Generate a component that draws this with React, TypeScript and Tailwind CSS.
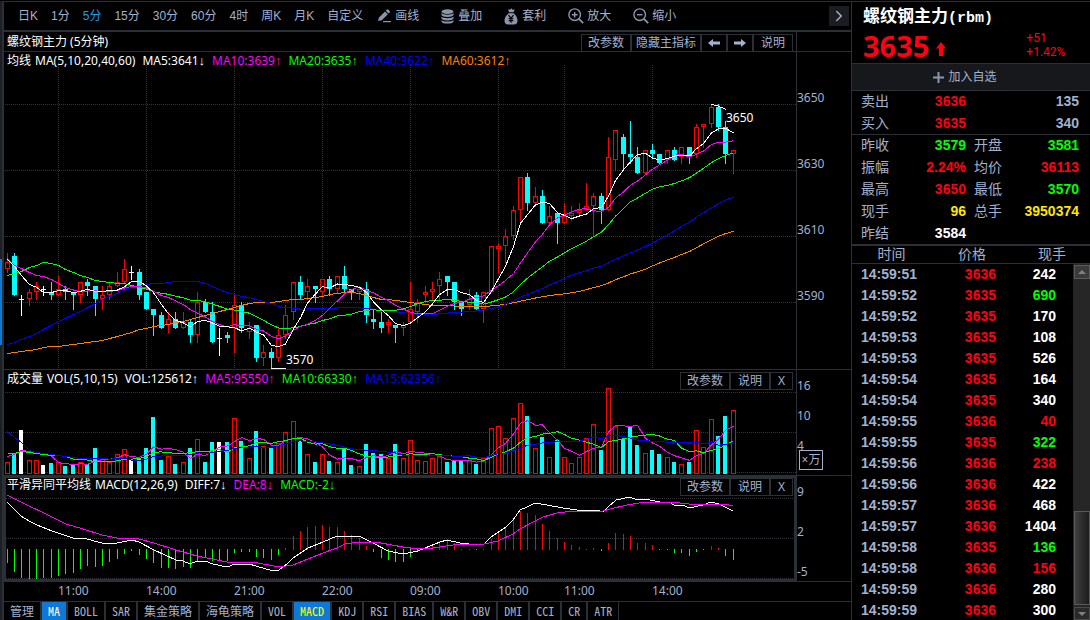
import React from "react";
import { ChevronRight } from "lucide-react";

const UI_FONT = "font-['Liberation_Sans','Noto_Sans_CJK_SC',sans-serif]";
const LABEL_FONT = "font-['Noto_Sans','Noto_Sans_CJK_SC',sans-serif]";

// [kind, high, body top, body bottom, low]; r = rising, c = falling, w = unchanged
type Candle = ["r" | "c" | "w", number, number, number, number];

const candles: Candle[] = [
  ["r", 3605, 3602, 3600, 3599], ["c", 3605, 3604, 3592, 3592], ["w", 3592, 3591, 3591, 3586], ["r", 3594, 3593, 3591, 3589],
  ["r", 3596, 3595, 3593, 3591], ["w", 3595, 3594, 3594, 3592], ["c", 3596, 3593, 3592, 3591], ["r", 3598, 3594, 3592, 3592],
  ["c", 3595, 3594, 3593, 3591], ["c", 3593, 3593, 3592, 3588], ["r", 3596, 3596, 3592, 3590], ["c", 3597, 3596, 3595, 3592],
  ["c", 3595, 3595, 3591, 3586], ["r", 3595, 3592, 3591, 3588], ["r", 3596, 3595, 3592, 3591], ["r", 3599, 3596, 3595, 3595],
  ["r", 3603, 3600, 3596, 3596], ["w", 3601, 3599, 3599, 3597], ["c", 3600, 3599, 3592, 3591], ["c", 3593, 3593, 3588, 3588],
  ["c", 3588, 3588, 3586, 3580], ["c", 3587, 3586, 3582, 3582], ["r", 3587, 3585, 3583, 3581], ["c", 3587, 3585, 3582, 3582],
  ["r", 3587, 3584, 3582, 3582], ["c", 3585, 3584, 3580, 3578], ["r", 3593, 3590, 3580, 3578], ["c", 3591, 3590, 3587, 3587],
  ["c", 3590, 3587, 3578, 3578], ["w", 3582, 3579, 3579, 3574], ["c", 3581, 3580, 3579, 3578], ["r", 3592, 3589, 3582, 3575],
  ["c", 3590, 3589, 3582, 3581], ["r", 3584, 3582, 3581, 3579], ["c", 3583, 3583, 3573, 3572], ["r", 3577, 3575, 3573, 3571],
  ["c", 3576, 3575, 3573, 3570], ["r", 3582, 3580, 3573, 3572], ["r", 3589, 3586, 3580, 3579], ["r", 3596, 3596, 3587, 3585],
  ["c", 3598, 3596, 3592, 3591], ["r", 3597, 3595, 3593, 3591], ["c", 3595, 3595, 3594, 3590], ["r", 3597, 3597, 3593, 3592],
  ["c", 3598, 3597, 3594, 3592], ["r", 3598, 3598, 3594, 3593], ["c", 3601, 3598, 3594, 3593], ["c", 3594, 3594, 3593, 3591],
  ["r", 3595, 3594, 3593, 3591], ["c", 3596, 3594, 3586, 3584], ["c", 3588, 3585, 3584, 3582], ["c", 3587, 3584, 3582, 3581],
  ["r", 3585, 3584, 3583, 3581], ["c", 3583, 3583, 3582, 3578], ["r", 3584, 3583, 3582, 3580], ["r", 3596, 3588, 3584, 3584],
  ["r", 3591, 3590, 3587, 3584], ["r", 3595, 3593, 3592, 3590], ["r", 3596, 3594, 3593, 3591], ["r", 3599, 3597, 3595, 3591],
  ["c", 3598, 3598, 3596, 3592], ["c", 3596, 3596, 3590, 3588], ["c", 3590, 3590, 3588, 3586], ["r", 3594, 3591, 3589, 3588],
  ["c", 3593, 3592, 3588, 3588], ["r", 3593, 3593, 3588, 3584], ["r", 3607, 3607, 3593, 3593], ["r", 3608, 3607, 3606, 3599],
  ["r", 3612, 3610, 3607, 3602], ["r", 3619, 3618, 3610, 3609], ["r", 3628, 3628, 3618, 3615], ["c", 3629, 3628, 3620, 3618],
  ["r", 3625, 3622, 3620, 3619], ["c", 3624, 3622, 3614, 3614], ["r", 3619, 3616, 3614, 3614], ["c", 3617, 3617, 3614, 3608],
  ["r", 3620, 3616, 3614, 3614], ["r", 3619, 3617, 3616, 3615], ["r", 3620, 3618, 3617, 3616], ["r", 3626, 3619, 3618, 3618],
  ["r", 3623, 3622, 3619, 3610], ["c", 3623, 3622, 3618, 3614], ["r", 3640, 3634, 3618, 3618], ["r", 3642, 3642, 3633, 3630],
  ["c", 3641, 3640, 3635, 3630], ["c", 3645, 3635, 3634, 3632], ["c", 3637, 3634, 3629, 3629], ["r", 3636, 3636, 3629, 3629],
  ["c", 3638, 3636, 3635, 3634], ["c", 3635, 3635, 3632, 3632], ["r", 3636, 3636, 3633, 3632], ["c", 3637, 3636, 3633, 3633],
  ["r", 3637, 3637, 3634, 3632], ["c", 3637, 3637, 3634, 3632], ["r", 3644, 3643, 3635, 3634], ["r", 3644, 3644, 3643, 3637],
  ["r", 3650, 3649, 3644, 3643], ["c", 3650, 3649, 3643, 3642], ["c", 3645, 3643, 3635, 3632], ["r", 3636, 3636, 3635, 3629],
];

const volumes = [
  12, 20, 44, 14, 14, 9, 11, 12, 8, 10, 12, 10, 26, 16, 12, 20, 25, 15, 15, 26, 57, 14, 18, 10, 12,
  26, 35, 12, 32, 32, 32, 56, 33, 16, 43, 28, 26, 31, 42, 53, 33, 20, 12, 20, 13, 12, 26, 9, 8, 30,
  21, 20, 16, 30, 16, 34, 14, 13, 16, 18, 12, 13, 13, 14, 10, 16, 46, 48, 36, 56, 71, 58, 26, 37, 17,
  34, 17, 11, 17, 36, 50, 24, 86, 48, 35, 48, 29, 21, 24, 20, 17, 12, 10, 12, 44, 27, 55, 38, 58, 64,
];

const macd = [
  -14, -23, -29, -30, -30, -29, -29, -27, -25, -24, -20, -17, -18, -17, -13, -10, -5, -2, -6, -10, -14, -19, -19, -20, -18,
  -19, -12, -9, -12, -12, -12, -4, -3, -3, -8, -9, -11, -6, 2, 14, 19, 23, 24, 25, 23, 23, 19, 15, 12, 4,
  -3, -9, -11, -13, -13, -8, -3, 1, 4, 9, 11, 7, 1, 1, -1, 1, 11, 17, 22, 30, 39, 37, 35, 26, 19,
  12, 8, 5, 3, 1, 2, -2, 7, 17, 16, 14, 7, 7, 5, -1, -1, -4, -4, -7, -3, -1, 4, 2, -7, -11,
];

// Lead-in heights for averages whose window starts before the first visible bar
const leadMa5 = [259, 266, 275, 284];
const leadMa10 = [258, 265, 268, 272, 275, 276, 279, 283, 287];
const leadMa20 = [275, 273, 271, 267, 265, 262, 263, 265, 269, 272, 275, 277, 280, 281, 282, 283, 283, 285, 287];
const leadMa40 = [
  344, 342, 339, 336, 333, 329, 325, 321, 318, 314, 311, 307, 303, 299, 296, 293, 289, 287, 286, 284,
  283, 283, 282, 281, 281, 281, 281, 283, 286, 289, 292, 294, 296, 297, 299, 301, 303, 306, 307,
];
const leadMa60 = [
  353, 352, 351, 350, 349, 347, 346, 346, 345, 344, 343, 342, 341, 340, 338, 336, 334, 332, 329, 328,
  326, 325, 324, 322, 321, 319, 317, 315, 313, 311, 309, 307, 305, 303, 302, 302, 302, 301, 300, 299,
  299, 298, 297, 296, 294, 293, 292, 292, 293, 295, 297, 299, 299, 300, 301, 302, 303, 304, 305,
];
const leadVol5 = [456, 454, 450, 451];
const leadVol10 = [453, 453, 451, 452, 453, 454, 455, 455, 456];
const leadVol15 = [431, 437, 442, 450, 452, 453, 454, 455, 456, 457, 458, 458, 458, 458];

const diffLine =
  "7,502 21,516 29,521 37,525 52,531 73,538 83,538 102,543 117,543 132,540 139,542 154,550 176,560 183,561 190,564 197,561 205,561 213,564 227,567 235,564 249,564 273,571 279,570 287,564 293,558 308,548 323,542 337,536 359,536 373,543 388,551 403,554 418,551 425,548 440,542 447,540 460,543 477,545 484,544 491,537 506,527 513,520 520,510 527,507 535,503 547,505 563,508 577,510 598,510 601,512 604,511 608,507 616,500 630,497 637,500 645,499 660,502 669,502 674,505 683,505 689,508 703,505 711,502 719,504 725,507 733,511";
const deaLine =
  "7,495 21,502 29,506 44,513 58,520 66,524 83,529 102,535 117,538 139,539 154,543 176,550 197,556 227,562 253,562 279,567 293,565 308,559 323,553 337,548 345,544 359,542 370,542 381,543 403,547 418,549 433,548 460,544 484,544 498,541 513,534 520,529 535,521 543,517 557,513 573,511 603,511 610,509 627,505 645,502 670,502 689,504 717,504 725,504 733,506";

const xAt = (i: number) => Math.floor(7 + (22 * i) / 3);
const priceY = (p: number) => Math.round(104 + (3650 - p) * 3.3);
const closes = candles.map(([kind, , top, bottom]) => (kind === "r" ? top : bottom));

function average(values: number[], span: number, lead: number[], toY: (v: number) => number) {
  return values
    .map((_, i) => {
      if (i < lead.length) return `${xAt(i) + 0.5},${lead[i] + 0.5}`;
      const slice = values.slice(i - span + 1, i + 1);
      const y = toY(slice.reduce((a, b) => a + b, 0) / span);
      return `${xAt(i) + 0.5},${y.toFixed(1)}`;
    })
    .join(" ");
}

const rawPriceY = (p: number) => 104.5 + (3650 - p) * 3.3;
const volY = (h: number) => 474.5 - h;

const barColor = { r: "#ff0000", c: "#00ffff", w: "#ffffff" };

function Line({ points, color }: { points: string; color: string }) {
  return <polyline points={points} fill="none" stroke={color} strokeWidth="1" />;
}

function Rules({ ys, from, to }: { ys: number[]; from: number; to: number }) {
  return (
    <g stroke="#33343c" strokeDasharray="1 1">
      {ys.map((y) => (
        <line key={y} x1={from} x2={to} y1={y + 0.5} y2={y + 0.5} />
      ))}
    </g>
  );
}

function PriceChart() {
  return (
    <svg viewBox="4 52 792 317" preserveAspectRatio="none" shapeRendering="crispEdges" className="col-start-1 row-start-1 h-full w-full" aria-label="K线图">
      <Rules ys={[104, 170, 236, 302]} from={5} to={796} />
      <g stroke="#33343c" strokeDasharray="1 1">
        {[58, 146, 234, 322, 410, 498, 564, 652].map((x) => (
          <line key={x} x1={x + 0.5} x2={x + 0.5} y1="65" y2="369" />
        ))}
      </g>
      {candles.map(([kind, high, top, bottom, low], i) => {
        const x = xAt(i);
        const color = barColor[kind];
        const yTop = priceY(top);
        const yBottom = priceY(bottom);
        return (
          <g key={i}>
            <rect x={x} y={priceY(high)} width="1" height={priceY(low) - priceY(high) + 1} fill={color} />
            {kind === "r" && (
              <rect x={x - 1.5} y={yTop + 0.5} width="4" height={Math.max(yBottom - yTop - 1, 2)} fill="#000" stroke={color} />
            )}
            {kind === "c" && <rect x={x - 2} y={yTop} width="5" height={yBottom - yTop} fill={color} />}
            {kind === "w" && <rect x={x - 2} y={yTop} width="5" height="1" fill={color} />}
          </g>
        );
      })}
      <Line points={average(closes, 60, leadMa60, rawPriceY)} color="#ff8000" />
      <Line points={average(closes, 40, leadMa40, rawPriceY)} color="#0000ff" />
      <Line points={average(closes, 20, leadMa20, rawPriceY)} color="#00ff00" />
      <Line points={average(closes, 10, leadMa10, rawPriceY)} color="#ff00ff" />
      <Line points={average(closes, 5, leadMa5, rawPriceY)} color="#ffffff" />
      <Line points="711,104.5 717,105.5 726,109.5" color="#ffffff" />
      <Line points="271,368.5 286,368.5" color="#ffffff" />
      <g fill="#ffffff" className={`text-[12px] ${LABEL_FONT}`}>
        <text x="726" y="122">3650</text>
        <text x="286" y="364">3570</text>
      </g>
    </svg>
  );
}

function VolumeChart() {
  return (
    <svg viewBox="4 370 792 105" preserveAspectRatio="none" shapeRendering="crispEdges" className="col-start-1 row-start-1 h-full w-full" aria-label="成交量图">
      <Rules ys={[392, 432, 472]} from={5} to={796} />
      {volumes.map((h, i) => {
        const x = xAt(i);
        const kind = candles[i][0];
        return kind === "r" ? (
          <rect key={i} x={x - 1.5} y={474.5 - h} width="4" height={h - 1} fill="#000" stroke={barColor.r} />
        ) : (
          <rect key={i} x={x - 2} y={474 - h} width="4" height={h} fill={barColor[kind]} />
        );
      })}
      <Line points={average(volumes, 5, leadVol5, volY)} color="#ff00ff" />
      <Line points={average(volumes, 10, leadVol10, volY)} color="#00ff00" />
      <Line points={average(volumes, 15, leadVol15, volY)} color="#0000ff" />
    </svg>
  );
}

function MacdChart() {
  return (
    <svg viewBox="6 478 788 101" preserveAspectRatio="none" shapeRendering="crispEdges" className="col-start-1 row-start-1 h-full w-full" aria-label="MACD图">
      <Rules ys={[498, 538, 578]} from={6} to={794} />
      {macd.map((v, i) => (
        <rect key={i} x={xAt(i)} y={v > 0 ? 550 - v : 549} width="1" height={Math.abs(v)} fill={v > 0 ? "#ff0000" : "#00ff00"} />
      ))}
      <Line points={diffLine} color="#ffffff" />
      <Line points={deaLine} color="#ff00ff" />
    </svg>
  );
}

type LegendItem = { text: string; arrow?: string; tone: string };

function Legend({ title, items }: { title: string; items: LegendItem[] }) {
  return (
    <div className={`flex gap-[7px] whitespace-nowrap text-[12px] leading-[18px] ${LABEL_FONT}`}>
      {items.map((item, i) => (
        <span key={item.text} className={item.tone}>
          {i === 0 && <span className="mr-1">{title}</span>}
          {item.text}
          {item.arrow && <span className="font-['Liberation_Sans',sans-serif] text-[13px] leading-none">{item.arrow}</span>}
        </span>
      ))}
    </div>
  );
}

const WHITE = "text-white";
const MAGENTA = "text-[#ff00ff]";
const GREEN = "text-[#00ff00]";
const BLUE = "text-[#0000ff]";
const ORANGE = "text-[#ff8000]";

function PanelButton({ className, label, children }: { className: string; label?: string; children: React.ReactNode }) {
  return (
    <button type="button" aria-label={label} className={`flex h-[18px] items-center justify-center border border-[#2b3036] bg-black text-[12px] leading-none ${className}`}>
      {children}
    </button>
  );
}

function PanelTools() {
  return (
    <div className="flex">
      <PanelButton className="w-[50px]">改参数</PanelButton>
      <PanelButton className="w-10">说明</PanelButton>
      <PanelButton className="w-[23px]" label="关闭">
        <span className={LABEL_FONT}>X</span>
      </PanelButton>
    </div>
  );
}

function SolidArrow({ className }: { className?: string }) {
  return (
    <svg viewBox="0 0 12 8" className={`h-2 w-3 ${className ?? ""}`} fill="currentColor">
      <path d="M0 4 5 0v2.5h7v3H5V8z" />
    </svg>
  );
}

function PencilIcon() {
  return (
    <svg viewBox="0 0 14 14" className="h-[14px] w-[14px]" fill="#8b96ab">
      <path d="M1 12 2 8.5 8 2.5l2.8 2.8-6 6z" />
      <path d="M8.8 1.7 10 .5q.6-.5 1.2 0l1.5 1.5q.5.6 0 1.2l-1.2 1.2z" />
      <rect x="6" y="12" width="8" height="1.2" />
    </svg>
  );
}

function StackIcon() {
  return (
    <svg viewBox="0 0 13 15" className="h-[15px] w-[13px]" fill="#8b96ab">
      <ellipse cx="6.5" cy="2.6" rx="6" ry="2.3" />
      <path d="M.5 4.1q1.3 1.7 6 1.7t6-1.7v2q-1 1.9-6 1.9t-6-1.9z" />
      <path d="M.5 7.5q1.3 1.7 6 1.7t6-1.7v2q-1 1.9-6 1.9t-6-1.9z" />
      <path d="M.5 10.9q1.3 1.7 6 1.7t6-1.7v1.5q-1 2.2-6 2.2t-6-2.2z" />
    </svg>
  );
}

function BagIcon() {
  return (
    <svg viewBox="0 0 14 17" className="h-[17px] w-[14px]">
      <path fill="#8b96ab" d="M4.2 1.2 6 1.8 7.3.2l1.2 1.5 2.3-.3L9.5 4.2H5z" />
      <path fill="#8b96ab" d="M4.700 5.2h5q3.8 3.4 3.8 7.3 0 4-3.5 4H4q-3.5 0-3.5-4 0-3.9 4.2-7.3z" />
      <path fill="none" stroke="#000" strokeWidth="1.2" d="M4.5 7.200 7 10.2l2.5-3M7 10.2v4.6M4.700 10.7h4.6M4.700 12.7h4.6" />
    </svg>
  );
}

function MagnifierIcon({ plus }: { plus?: boolean }) {
  return (
    <svg viewBox="0 0 16 16" className="h-4 w-4" fill="none" stroke="#8b96ab" strokeWidth="1.4">
      <circle cx="6.700" cy="6.700" r="5.800" />
      <path d="M10.900 10.900 15.200 15.200" strokeWidth="1.8" />
      <path d={plus ? "M3.900 6.700h5.600M6.700 3.900v5.600" : "M3.900 6.700h5.600"} />
    </svg>
  );
}

const periods = ["日K", "1分", "5分", "15分", "30分", "60分", "4时", "周K", "月K", "自定义"];

function Toolbar() {
  return (
    <nav className="flex h-[31px] items-center border-b-2 border-[#2b3036] border-t border-t-[#2b3036] pl-[14px] text-[12px]">
      <div className="flex gap-[13px]">
        {periods.map((p) => (
          <button key={p} type="button" className={`whitespace-nowrap ${p === "5分" ? "text-[#1e9dee]" : ""}`}>
            {p}
          </button>
        ))}
      </div>
      <div className="ml-[14px] flex gap-[22px] whitespace-nowrap">
        <button type="button" className="flex items-center gap-1">
          <PencilIcon />画线
        </button>
        <button type="button" className="flex items-center gap-1">
          <StackIcon />叠加
        </button>
        <button type="button" className="flex items-center gap-1">
          <BagIcon />套利
        </button>
        <button type="button" className="flex items-center gap-[3px]">
          <MagnifierIcon plus />放大
        </button>
        <button type="button" className="flex items-center gap-[3px]">
          <MagnifierIcon />缩小
        </button>
      </div>
      <button type="button" aria-label="更多" className="ml-auto mr-[2px] flex h-5 w-5 items-center justify-center bg-[#1c1d21]">
        <ChevronRight size={18} strokeWidth={2} />
      </button>
    </nav>
  );
}

function Axis({ className, labels, step }: { className?: string; labels: string[]; step: string }) {
  return (
    <div className={`w-[55px] shrink-0 border-l border-[#2b3036] text-[12px] leading-4 ${LABEL_FONT} ${className ?? ""}`}>
      {labels.map((l) => (
        <div key={l} className={step}>
          {l}
        </div>
      ))}
    </div>
  );
}

const times: [string, string][] = [
  ["11:00", "w-[88px]"], ["14:00", "w-[88px]"], ["21:00", "w-[88px]"], ["22:00", "w-[88px]"],
  ["09:00", "w-[88px]"], ["10:00", "w-[66px]"], ["11:00", "w-[88px]"], ["14:00", "w-[88px]"],
];

const indicators = ["管理", "MA", "BOLL", "SAR", "集金策略", "海龟策略", "VOL", "MACD", "KDJ", "RSI", "BIAS", "W&R", "OBV", "DMI", "CCI", "CR", "ATR"];

function ChartSide() {
  return (
    <main className="flex min-w-0 flex-1 flex-col">
      <Toolbar />
      <div className="flex h-5 shrink-0 border-b border-[#2b3036]">
        <h1 className={`flex-1 pl-[3px] text-[12px] leading-[19px] text-white ${LABEL_FONT}`}>螺纹钢主力 (5分钟)</h1>
        <div className="flex pr-[3px] pt-[2px]">
          <PanelButton className="w-[50px]">改参数</PanelButton>
          <PanelButton className="w-[70px]">隐藏主指标</PanelButton>
          <PanelButton className="w-[26px]" label="上一个">
            <SolidArrow />
          </PanelButton>
          <PanelButton className="w-[26px]" label="下一个">
            <SolidArrow className="rotate-180" />
          </PanelButton>
          <PanelButton className="w-10">说明</PanelButton>
        </div>
        <div className="w-[55px] border-l border-[#2b3036]" />
      </div>

      <section className="flex min-h-0 flex-1 border-b border-[#2b3036]">
        <div className="grid min-w-0 flex-1 grid-rows-[minmax(0,1fr)]">
          <PriceChart />
          <div className="z-10 col-start-1 row-start-1 self-start pl-[3px]">
            <Legend
              title="均线"
              items={[
                { text: "MA(5,10,20,40,60)", tone: WHITE },
                { text: "MA5:3641", arrow: "↓", tone: WHITE },
                { text: "MA10:3639", arrow: "↑", tone: MAGENTA },
                { text: "MA20:3635", arrow: "↑", tone: GREEN },
                { text: "MA40:3622", arrow: "↑", tone: BLUE },
                { text: "MA60:3612", arrow: "↑", tone: ORANGE },
              ]}
            />
          </div>
        </div>
        <Axis className="pt-[38px]" step="h-[66px]" labels={["3650", "3630", "3610", "3590"]} />
      </section>

      <section className="flex h-[105px] shrink-0">
        <div className="grid min-w-0 flex-1 grid-rows-[minmax(0,1fr)]">
          <VolumeChart />
          <div className="z-10 col-start-1 row-start-1 flex justify-between self-start pl-[3px] pr-[3px]">
            <Legend
              title="成交量"
              items={[
                { text: "VOL(5,10,15)", tone: WHITE },
                { text: "VOL:125612", arrow: "↑", tone: WHITE },
                { text: "MA5:95550", arrow: "↑", tone: MAGENTA },
                { text: "MA10:66330", arrow: "↑", tone: GREEN },
                { text: "MA15:62356", arrow: "↑", tone: BLUE },
              ]}
            />
            <div className="pt-[2px]">
              <PanelTools />
            </div>
          </div>
        </div>
        <div className="relative flex">
          <Axis className="pt-2" step="h-[30px]" labels={["16", "10", "4"]} />
          <button type="button" className={`absolute bottom-[5px] left-[3px] h-5 w-6 border border-[#a3b1cf] bg-black text-center text-[12px] leading-[18px] ${LABEL_FONT}`}>
            ×万
          </button>
        </div>
      </section>

      <section className="flex h-[107px] shrink-0">
        <div className="grid min-w-0 flex-1 grid-rows-[minmax(0,1fr)] border-x-2 border-y-[3px] border-[#2b3036]">
          <MacdChart />
          <div className="z-10 col-start-1 row-start-1 flex justify-between self-start pl-px pr-px">
            <div className="-mt-[2px]">
              <Legend
                title="平滑异同平均线"
                items={[
                  { text: "MACD(12,26,9)", tone: WHITE },
                  { text: "DIFF:7", arrow: "↓", tone: WHITE },
                  { text: "DEA:8", arrow: "↓", tone: MAGENTA },
                  { text: "MACD:-2", arrow: "↓", tone: GREEN },
                ]}
              />
            </div>
            <PanelTools />
          </div>
        </div>
        <Axis className="border-y pt-2" step="h-10" labels={["9", "2", "-5"]} />
      </section>

      <div className={`flex h-5 shrink-0 border-b border-[#2b3036] pl-[54px] text-[12px] leading-[18px] ${LABEL_FONT}`}>
        {times.map(([t, w], i) => (
          <span key={i} className={w}>
            {t}
          </span>
        ))}
      </div>

      <div className="flex h-[18px] shrink-0 font-['Noto_Sans_Mono_CJK_SC','Noto_Sans_CJK_SC',monospace] text-[12px] leading-[18px]">
        {indicators.map((t) => {
          const tone = t === "MA" ? "bg-[#1078d7] text-white" : t === "MACD" ? "bg-[#1078d7] text-[#ffff00]" : "bg-black";
          return (
            <button key={t} type="button" className={`whitespace-nowrap border-x border-[#2b3036] px-[6px] first:border-l-0 ${tone}`}>
              {t}
            </button>
          );
        })}
      </div>
    </main>
  );
}

const RED_T = "text-[#ff0013]";
const DIM_T = "text-[#a3b1cf]";

const stats: [string, string, string][] = [
  ["昨收", "3579", GREEN], ["开盘", "3581", GREEN],
  ["振幅", "2.24%", RED_T], ["均价", "36113", RED_T],
  ["最高", "3650", RED_T], ["最低", "3570", GREEN],
  ["现手", "96", "text-[#ffe600]"], ["总手", "3950374", "text-[#ffe600]"],
  ["昨结", "3584", WHITE],
];

const trades: [string, string, string, string][] = [
  ["14:59:51", "3636", "242", WHITE], ["14:59:52", "3635", "690", GREEN], ["14:59:52", "3635", "170", WHITE],
  ["14:59:53", "3635", "108", WHITE], ["14:59:53", "3635", "526", WHITE], ["14:59:54", "3635", "164", WHITE],
  ["14:59:54", "3635", "340", WHITE], ["14:59:55", "3636", "40", RED_T], ["14:59:55", "3635", "322", GREEN],
  ["14:59:56", "3636", "238", RED_T], ["14:59:56", "3636", "422", WHITE], ["14:59:57", "3636", "468", WHITE],
  ["14:59:57", "3636", "1404", WHITE], ["14:59:58", "3635", "136", GREEN], ["14:59:58", "3636", "156", RED_T],
  ["14:59:59", "3636", "280", WHITE], ["14:59:59", "3636", "300", WHITE],
];

function Quote({ label, value, tone, extra }: { label: string; value: string; tone: string; extra?: string }) {
  return (
    <>
      <div className="flex justify-between">
        <dt>{label}</dt>
        <dd className={`font-bold ${tone}`}>{value}</dd>
      </div>
      {extra && <div className="text-right font-bold">{extra}</div>}
    </>
  );
}

function ScrollBar() {
  return (
    <div className="flex w-[17px] shrink-0 flex-col">
      <div className="h-[18px] shrink-0 border-b border-[#2b3036]" />
      <div className="flex min-h-0 flex-1 flex-col bg-[#262626] pl-px pt-px">
        <button type="button" aria-label="向上" className="flex h-[14px] shrink-0 items-center justify-center border border-[#5a5a5a] bg-[#3a3a3a]">
          <svg viewBox="0 0 8 4" className="h-1 w-2" fill="#808080"><path d="M0 4 4 0l4 4z" /></svg>
        </button>
        <div className="flex-1" />
        <div className="h-[94px] shrink-0 border border-[#5a5a5a] bg-linear-to-r from-[#404040] to-[#1c1c1c]" />
        <button type="button" aria-label="向下" className="mt-[2px] flex h-[13px] shrink-0 items-center justify-center border border-[#4a4a4a] bg-[#2a2a2a]">
          <svg viewBox="0 0 8 4" className="h-1 w-2" fill="#808080"><path d="M0 0h8L4 4z" /></svg>
        </button>
      </div>
    </div>
  );
}

function QuoteSide() {
  return (
    <aside className="flex w-[239px] shrink-0 flex-col border-l border-[#2b3036] text-[14px]">
      <header className="h-[62px] shrink-0 border-t border-[#2b3036] pl-[11px]">
        <h2 className="pt-1 text-[17px] leading-[22px] font-bold text-white">
          螺纹钢主力<span className="font-['Liberation_Mono',monospace] text-[15px]">(rbm)</span>
        </h2>
        <div className={`flex ${RED_T}`}>
          <strong className={`text-[29px] leading-8 ${LABEL_FONT}`}>3635</strong>
          <svg viewBox="0 0 10 14" className="ml-[7px] mt-3 h-[14px] w-[10px]" fill="#ff0013">
            <path d="M5 0l5 6.5H7V14H3V6.5H0z" />
          </svg>
          <div className="ml-20 mt-px font-['Roboto',sans-serif] text-[12px] leading-[14px]">
            <div>+51</div>
            <div>+1.42%</div>
          </div>
        </div>
      </header>
      <button type="button" className="flex h-7 shrink-0 items-center justify-center gap-1 border-y border-[#2b3036] bg-[#16181b] pr-3 text-[12px]">
        <svg viewBox="0 0 11 11" className="h-[11px] w-[11px]" fill="#8b96ab"><path d="M4.500 0h2v4.500H11v2H6.500V11h-2V6.500H0v-2h4.500z" /></svg>
        加入自选
      </button>
      <dl className="grid shrink-0 grid-cols-2 gap-x-2 gap-y-px border-b border-[#2b3036] pl-[9px] pr-[11px] leading-[21px]">
        <Quote label="卖出" value="3636" tone={RED_T} extra="135" />
        <Quote label="买入" value="3635" tone={RED_T} extra="340" />
      </dl>
      <dl className="grid shrink-0 grid-cols-2 gap-x-2 gap-y-px border-b-2 border-[#2b3036] pl-[9px] pr-[11px] leading-[21px]">
        {stats.map(([label, value, tone]) => (
          <Quote key={label} label={label} value={value} tone={tone} />
        ))}
      </dl>
      <div className="flex min-h-0 flex-1">
        <div className="flex-1 overflow-hidden">
          <table className="w-full table-fixed border-collapse">
            <colgroup>
              <col className="w-[79px]" />
              <col className="w-[82px]" />
              <col />
            </colgroup>
            <thead className="leading-[17px]">
              <tr>
                <th className="p-0 font-normal">时间</th>
                <th className="p-0 font-normal">价格</th>
                <th className="p-0 pr-[7px] text-right font-normal">现手</th>
              </tr>
              <tr>
                <td colSpan={3} className="h-px bg-[#2b3036] p-0" />
              </tr>
            </thead>
            <tbody className="font-bold leading-[21px]">
              {trades.map(([time, price, volume, tone], i) => (
                <tr key={i}>
                  <td className={`p-0 pl-[9px] ${DIM_T}`}>{time}</td>
                  <td className={`p-0 pr-[17px] text-right ${RED_T}`}>{price}</td>
                  <td className={`p-0 pr-[17px] text-right ${tone}`}>{volume}</td>
                </tr>
              ))}
            </tbody>
          </table>
        </div>
        <ScrollBar />
      </div>
    </aside>
  );
}

export default function App() {
  return (
    <div className={`flex h-screen overflow-hidden bg-black pt-px text-[#a3b1cf] ${UI_FONT}`}>
      <div className="flex w-1 shrink-0 flex-col border-r-2 border-[#2b3036] bg-[#1c1f24]">
        <div className="flex-[258]" />
        <div className="h-[86px] bg-[#1078d7]" />
        <div className="flex-[275]" />
      </div>
      <ChartSide />
      <QuoteSide />
    </div>
  );
}
